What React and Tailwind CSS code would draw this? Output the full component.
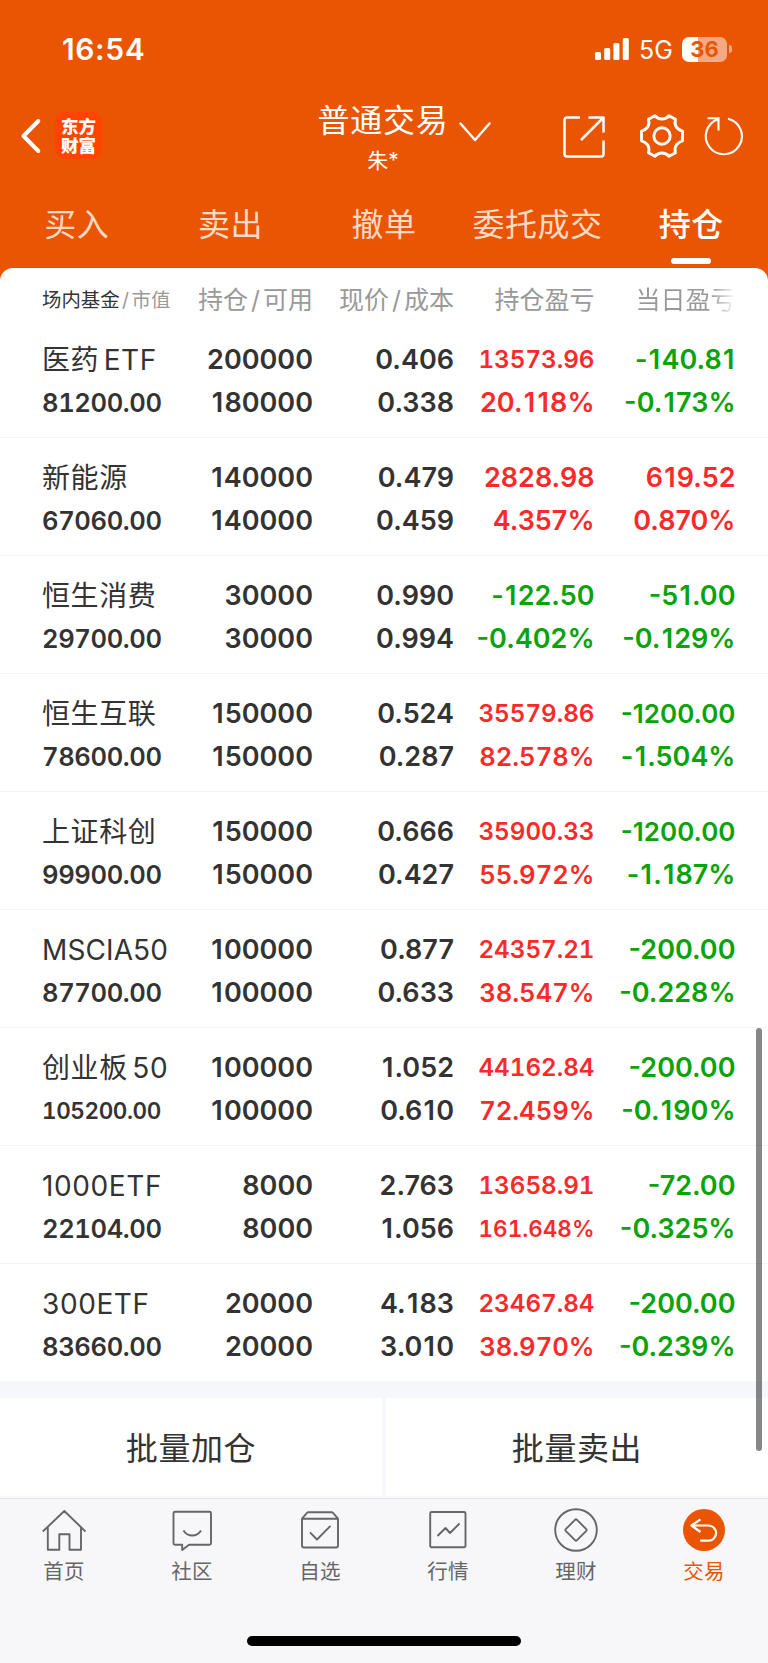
import React from 'react';
import clsx from 'clsx';

const TABS = ['买入', '卖出', '撤单', '委托成交', '持仓'];

// fitted figures are [text, font size step]; long figures shrink to fit their column
const HOLDINGS = [
  { name: '医药 ETF', value: ['81200.00', 'md'], qty: ['200000', '180000'], price: ['0.406', '0.338'], profit: [['13573.96', 'sm'], ['20.118%', 'lg']], today: ['-140.81', '-0.173%'] },
  { name: '新能源', value: ['67060.00', 'md'], qty: ['140000', '140000'], price: ['0.479', '0.459'], profit: [['2828.98', 'lg'], ['4.357%', 'lg']], today: ['619.52', '0.870%'] },
  { name: '恒生消费', value: ['29700.00', 'md'], qty: ['30000', '30000'], price: ['0.990', '0.994'], profit: [['-122.50', 'lg'], ['-0.402%', 'lg']], today: ['-51.00', '-0.129%'] },
  { name: '恒生互联', value: ['78600.00', 'md'], qty: ['150000', '150000'], price: ['0.524', '0.287'], profit: [['35579.86', 'sm'], ['82.578%', 'md']], today: ['-1200.00', '-1.504%'] },
  { name: '上证科创', value: ['99900.00', 'md'], qty: ['150000', '150000'], price: ['0.666', '0.427'], profit: [['35900.33', 'sm'], ['55.972%', 'md']], today: ['-1200.00', '-1.187%'] },
  { name: 'MSCIA50', value: ['87700.00', 'md'], qty: ['100000', '100000'], price: ['0.877', '0.633'], profit: [['24357.21', 'sm'], ['38.547%', 'md']], today: ['-200.00', '-0.228%'] },
  { name: '创业板 50', value: ['105200.00', 'xs'], qty: ['100000', '100000'], price: ['1.052', '0.610'], profit: [['44162.84', 'sm'], ['72.459%', 'md']], today: ['-200.00', '-0.190%'] },
  { name: '1000ETF', value: ['22104.00', 'md'], qty: ['8000', '8000'], price: ['2.763', '1.056'], profit: [['13658.91', 'sm'], ['161.648%', 'xs']], today: ['-72.00', '-0.325%'] },
  { name: '300ETF', value: ['83660.00', 'md'], qty: ['20000', '20000'], price: ['4.183', '3.010'], profit: [['23467.84', 'sm'], ['38.970%', 'md']], today: ['-200.00', '-0.239%'] },
];

const SIZES = {
  lg: 'text-[27px]',
  fit: 'text-[26px]',
  md: 'text-[25.6px] tabular-nums',
  sm: 'text-[24.2px] tabular-nums',
  xs: 'text-[22.5px] tabular-nums',
};

const GRID = 'grid grid-cols-[136px_135px_141px_140.5px_141px] pl-[42px]';

// a bare "1" is much narrower than the other digits, so it gets a little room
function spaced(text) {
  return text.split(/(1)/).map((part, i) => (part === '1' ? <span key={i} className="px-[1.2px]">1</span> : part));
}

function Figure({ text, size = 'lg', signed, left }) {
  const color = !signed ? 'text-[#333]' : text.startsWith('-') ? 'text-[#0ba30b]' : 'text-[#fa2a2a]';
  return (
    <div className={clsx('h-[43px] leading-[43px] font-[560] whitespace-nowrap', left ? 'text-left tracking-[-0.4px]' : 'text-right', SIZES[size], color)}>
      {size === 'lg' ? spaced(text) : text}
    </div>
  );
}

function HoldingRow({ item }) {
  return (
    <div className={clsx(GRID, 'h-[118px] pt-[18px] border-b border-[#f4f4f5] last:h-[117px] last:border-b-0')}>
      <div>
        <div className={clsx('h-[43px] leading-[44px] text-[28px] text-[#333] whitespace-nowrap [word-spacing:-4px]', item.name === 'MSCIA50' ? 'tracking-[0.1px]' : 'tracking-[0.6px]')}>
          {item.name}
        </div>
        <Figure text={item.value[0]} size={item.value[1]} left />
      </div>
      <div>{item.qty.map((t, i) => <Figure key={i} text={t} />)}</div>
      <div>{item.price.map((t, i) => <Figure key={i} text={t} />)}</div>
      <div>{item.profit.map(([t, s], i) => <Figure key={i} text={t} size={s} signed />)}</div>
      <div>{item.today.map((t, i) => <Figure key={i} text={t} size={t.length > 7 ? 'fit' : 'lg'} signed />)}</div>
    </div>
  );
}

function StatusBar() {
  return (
    <div className="flex h-[98px] items-center pl-[62px] pr-[36px] text-white">
      <span className="text-[30px] font-semibold leading-none tracking-[0.6px]">16:54</span>
      <svg className="ml-auto" width="34" height="22" viewBox="0 0 34 22" fill="currentColor">
        <rect x="0" y="14" width="6" height="8" rx="1.5" />
        <rect x="9.2" y="10" width="6" height="12" rx="1.5" />
        <rect x="18.4" y="5" width="6" height="17" rx="1.5" />
        <rect x="27.8" y="0" width="6" height="22" rx="1.5" />
      </svg>
      <span className="ml-[10px] mt-[3px] w-[34px] text-[25px] leading-none">5G</span>
      <div className="ml-[9px] flex h-[25px] w-[45px] items-center justify-center rounded-[7px] bg-linear-to-r from-white from-[36%] to-[#f5aa82] to-[36%] text-[22px] font-bold leading-none text-[#ea5504]">
        36
      </div>
      <div className="ml-[2px] h-[8px] w-[3px] rounded-r-full bg-[#f5aa82]" />
    </div>
  );
}

function TitleBar() {
  return (
    <div className="flex h-[80px] items-center text-white">
      <svg className="ml-[20px] mt-[-4px]" width="22" height="38" viewBox="0 0 22 38" fill="none" stroke="currentColor" strokeWidth="4" strokeLinecap="round" strokeLinejoin="round">
        <path d="M18.3 4 3.5 19 18.3 34" />
      </svg>
      <div className="ml-[13px] mt-[-5px] flex h-[47px] w-[47px] flex-col items-center justify-center rounded-[9px] bg-[#ff4400] text-[17.5px] font-black leading-[19px]">
        <span>东方</span>
        <span>财富</span>
      </div>
      <div className="ml-[215px] w-[132px] text-center">
        <div className="h-[43px] whitespace-nowrap text-[32px] leading-[43px] tracking-[0.8px]">普通交易</div>
        <div className="h-[36px] text-[21px] leading-[37px]">朱*</div>
      </div>
      <svg className="ml-[10px] mt-[-13px]" width="32" height="20" viewBox="0 0 32 20" fill="none" stroke="currentColor" strokeWidth="2.4" strokeLinecap="round" strokeLinejoin="round">
        <path d="M1.5 1.5 16 18 30.5 1.5" />
      </svg>
      <svg className="ml-[71px] mt-[-3px]" width="44" height="44" viewBox="0 0 44 44" fill="none" stroke="currentColor" strokeWidth="2.5" strokeLinejoin="round">
        <path d="M18 2.5H5A2.5 2.5 0 0 0 2.5 5V39A2.5 2.5 0 0 0 5 41.5H39A2.5 2.5 0 0 0 41.5 39V25.5" />
        <path d="M26.5 2.5H41.5V17.5M41 3 19 25" />
      </svg>
      <svg className="ml-[33px] mt-[-4px]" width="46" height="46" viewBox="0 0 46 46" fill="none" stroke="currentColor" strokeWidth="2.9" strokeLinejoin="round">
        <path d="M16 2.8C18 5.2 20 6 23 6S28 5.2 30 2.8L36.5 6.3C35.5 10 36 12 37.3 14 39 16.2 40.5 17.5 43.5 18.2V27.8C40.5 28.5 39 29.8 37.3 32 36 34 35.5 36 36.5 39.7L30 43.2C28 40.8 26 40 23 40S18 40.8 16 43.2L9.5 39.7C10.5 36 10 34 8.7 32 7 29.8 5.5 28.5 2.5 27.8V18.2C5.5 17.5 7 16.2 8.7 14 10 12 10.5 10 9.5 6.3Z" />
        <circle cx="23" cy="23" r="8.2" />
      </svg>
      <svg className="ml-[19px] mt-[-4px]" width="40" height="40" viewBox="0 0 40 40" fill="none" stroke="currentColor" strokeWidth="2.1">
        <path d="M24 2.7A18 18 0 1 1 14 3.2M3.5 2.3H14.5V14.5" />
      </svg>
    </div>
  );
}

function Tabs() {
  return (
    <div className="flex h-[90px]">
      {TABS.map((tab) => {
        const active = tab === '持仓';
        return (
          <div key={tab} className="flex w-1/5 flex-col items-center">
            <span className={clsx('h-[80px] whitespace-nowrap text-[32px] leading-[94px] tracking-[0.5px]', active ? 'font-medium text-white' : 'text-[#ffdac4]')}>
              {tab}
            </span>
            {active && <span className="h-[6px] w-[40px] rounded-full bg-white" />}
          </div>
        );
      })}
    </div>
  );
}

const NAV = [
  {
    label: '首页',
    icon: <path d="M.8 23.5 22.3 3 43.5 23.5M5.8 19V41.7H17.3V26.3H27.5V41.7H39V19" />,
  },
  {
    label: '社区',
    icon: <path d="M5 3.7H39.5A1.5 1.5 0 0 1 41 5.2V35.2A1.5 1.5 0 0 1 39.5 36.7H19L12.2 42V36.7H5A1.5 1.5 0 0 1 3.5 35.2V5.2A1.5 1.5 0 0 1 5 3.7ZM13.5 22.5C17.5 29.2 27 29.2 31 22.5" />,
  },
  {
    label: '自选',
    icon: <path d="M4 10.7V37.5A2 2 0 0 0 6 39.5H38A2 2 0 0 0 40 37.5V10.7ZM4 10.7 9 4.8Q9.5 4.3 10.2 4.3H33.8Q34.5 4.3 35 4.8L40 10.7M12 24.3 19 31.5 32.5 17.8" />,
  },
  {
    label: '行情',
    icon: <path d="M5.7 4H38A1.5 1.5 0 0 1 39.5 5.5V37.8A1.5 1.5 0 0 1 38 39.3H5.7A1.5 1.5 0 0 1 4.2 37.8V5.5A1.5 1.5 0 0 1 5.7 4ZM11.5 28 19.5 20 24 25 33.5 15.5" />,
  },
  {
    label: '理财',
    icon: (
      <>
        <circle cx="22" cy="22" r="20.8" />
        <path d="M21.2 11.7Q22 11 22.8 11.7L32.3 21.2Q33 22 32.3 22.8L22.8 32.3Q22 33 21.2 32.3L11.7 22.8Q11 22 11.7 21.2Z" />
      </>
    ),
  },
  {
    label: '交易',
    active: true,
    icon: (
      <>
        <circle cx="22" cy="22" r="21" fill="#ea5504" stroke="none" />
        <path stroke="#fff" strokeWidth="2.2" d="M18.5 11.3 9.5 17.5 18.5 24M9.5 17.5H26.5A7.6 7.6 0 0 1 26.5 32.7H18.2" />
      </>
    ),
  },
];

function BottomNav() {
  return (
    <div className="flex h-[165px] flex-col items-center border-t border-[#e0e0e8] bg-[#f7f7fa]">
      <div className="flex w-full pt-[9px]">
        {NAV.map((item) => (
          <div key={item.label} className={clsx('flex w-1/6 flex-col items-center', item.active ? 'text-[#ea5504]' : 'text-[#666]')}>
            <svg width="44" height="44" viewBox="0 0 44 44" fill="none" stroke="currentColor" strokeWidth="1.9" strokeLinejoin="round">
              {item.icon}
            </svg>
            <span className="mt-[5px] text-[20.5px] leading-[30px] tracking-[0.3px]">{item.label}</span>
          </div>
        ))}
      </div>
      <div className="mt-[49px] h-[10px] w-[274px] rounded-full bg-black" />
    </div>
  );
}

export default function App() {
  return (
    <div className="relative h-[1663px] w-[768px] overflow-hidden bg-[#ea5504] font-['Inter','Noto_Sans_CJK_SC',sans-serif]">
      <StatusBar />
      <TitleBar />
      <Tabs />

      <div className="h-[1230px] rounded-t-[13px] bg-white">
        <div className={clsx(GRID, 'h-[52px] items-center whitespace-nowrap pt-[13px] text-right text-[25px] text-[#999]')}>
          <div className="text-left text-[19.4px]">
            <span className="text-[#333]">场内基金</span>
            <span className="mx-[2.5px]">/</span>
            市值
          </div>
          <div>持仓<span className="mx-[3px]">/</span>可用</div>
          <div>现价<span className="mx-[3px]">/</span>成本</div>
          <div>持仓盈亏</div>
          <div className="bg-linear-to-r from-[#999] from-[82%] to-white bg-clip-text text-transparent">当日盈亏</div>
        </div>

        <div>
          {HOLDINGS.map((item) => <HoldingRow key={item.name} item={item} />)}
        </div>

        <div className="h-[17px] bg-[#f5f7fa]" />
        <div className="flex h-[100px] gap-[4px] bg-[#f7f8fb] text-[32px] tracking-[0.6px] text-[#333]">
          <div className="flex h-[98px] flex-1 items-center justify-center bg-white pt-[4px]">批量加仓</div>
          <div className="flex h-[98px] flex-1 items-center justify-center bg-white pt-[4px]">批量卖出</div>
        </div>
      </div>

      <BottomNav />

      {/* scroll thumb */}
      <div className="absolute left-[756px] top-[1028px] h-[423px] w-[6px] rounded-full bg-black/47" />
    </div>
  );
}
